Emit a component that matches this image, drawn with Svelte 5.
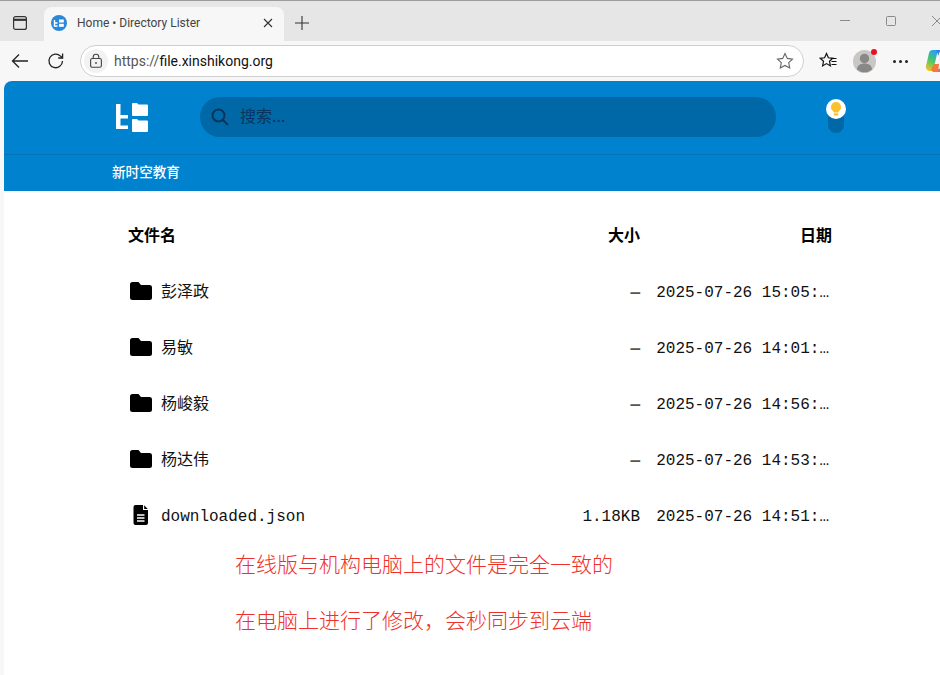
<script>
  const rows = [
    { name: '彭泽政', size: '—', date: '2025-07-26 15:05:…', dir: true },
    { name: '易敏', size: '—', date: '2025-07-26 14:01:…', dir: true },
    { name: '杨峻毅', size: '—', date: '2025-07-26 14:56:…', dir: true },
    { name: '杨达伟', size: '—', date: '2025-07-26 14:53:…', dir: true },
    { name: 'downloaded.json', size: '1.18KB', date: '2025-07-26 14:51:…', dir: false }
  ];
</script>

<div class="window">
  <div class="tabstrip">
    <svg class="tabs-ico" width="16" height="16" viewBox="0 0 16 16" fill="none" stroke="#333" stroke-width="1.2"><rect x="1.600" y="1.600" width="12.800" height="12.800" rx="2"/><path d="M2 4.800h12" stroke-width="2.200"/></svg>
    <div class="tab">
      <svg class="fav" width="16" height="16" viewBox="0 0 16 16"><circle cx="8" cy="8" r="8" fill="#2b88d8"/><path d="M3.500 5v6h3M3.500 8h3" stroke="#fff" stroke-width="1.400" fill="none"/><rect x="8" y="4.500" width="4.800" height="3" fill="#fff"/><rect x="8" y="8.800" width="4.800" height="3" fill="#fff"/></svg>
      <span class="tab-title">Home • Directory Lister</span>
      <svg class="tab-x" width="10" height="10" viewBox="0 0 10 10" stroke="#333" stroke-width="1.100"><path d="M1 1l8 8M9 1l-8 8"/></svg>
    </div>
    <svg class="plus" width="14" height="14" viewBox="0 0 14 14" stroke="#333" stroke-width="1.100"><path d="M7 0v14M0 7h14"/></svg>
    <div class="winctl">
      <svg width="10" height="10" viewBox="0 0 10 10" stroke="#8a8a8a"><path d="M0 4.500h10"/></svg>
      <svg width="10" height="10" viewBox="0 0 10 10" fill="none" stroke="#8a8a8a"><rect x=".5" y=".5" width="9" height="9" rx="1"/></svg>
      <svg width="10" height="10" viewBox="0 0 10 10" stroke="#8a8a8a"><path d="M0 0l10 10M10 0L0 10"/></svg>
    </div>
  </div>

  <div class="toolbar">
    <svg class="back" width="18" height="16" viewBox="0 0 18 16" fill="none" stroke="#222" stroke-width="1.300"><path d="M17 8H1.500M8 1.500L1.500 8 8 14.500"/></svg>
    <svg class="reload" width="18" height="18" viewBox="0 0 18 18" fill="none" stroke="#222" stroke-width="1.300"><path d="M15.500 9a6.800 6.800 0 1 1-2-4.900L15.600 6"/><path d="M15.600 1.600V6h-4.400"/></svg>
    <div class="address">
      <span class="lock"><svg width="14" height="16" viewBox="0 0 14 16" fill="none" stroke="#444" stroke-width="1.100"><rect x="1.600" y="5.500" width="10.800" height="8.800" rx="1.800"/><path d="M4.200 5.500V4a2.800 2.800 0 0 1 5.600 0v1.500"/><circle cx="7" cy="10" r=".9" fill="#444" stroke="none"/></svg></span>
      <span class="url"><span class="scheme">https://</span>file.xinshikong.org</span>
      <svg class="star" width="18" height="18" viewBox="0 0 18 18" fill="none" stroke="#666" stroke-width="1.100"><path d="M9 1.500l2.300 4.900 5.200.7-3.800 3.600 1 5.300L9 13.400l-4.700 2.600 1-5.300L1.500 7.100l5.200-.7z"/></svg>
    </div>
    <svg class="favs" width="18" height="18" viewBox="0 0 18 18" fill="none" stroke="#111" stroke-width="1.200"><path d="M7.500 1.500l1.900 4.300 4.400.5-3.300 3 .9 4.600-3.900-2.300-3.900 2.300.9-4.600-3.300-3 4.400-.5z"/><path d="M12 6.500h5.500M12.500 9.500h5M12.500 12.500h5" stroke-width="1.100"/></svg>
    <div class="avatar">
      <svg width="23" height="23" viewBox="0 0 23 23"><circle cx="11.500" cy="11.500" r="11.500" fill="#c9c7c5"/><circle cx="11.500" cy="8.500" r="4.700" fill="#8a8886"/><path d="M4 19.500c0-4 3.400-6 7.500-6s7.500 2 7.500 6a11.500 11.500 0 0 1-15 0z" fill="#8a8886"/></svg>
      <span class="dot"></span>
    </div>
    <span class="more"><i></i><i></i><i></i></span>
    <svg class="copilot" width="24" height="24" viewBox="0 0 24 24"><defs><linearGradient id="cpa" x1="0.500" y1="0" x2="0.200" y2="1"><stop offset="0" stop-color="#2aa5e8"/><stop offset=".45" stop-color="#48c76a"/><stop offset="1" stop-color="#f7c325"/></linearGradient><linearGradient id="cpb" x1="0.300" y1="0" x2="0.700" y2="1"><stop offset="0" stop-color="#2f7df0"/><stop offset=".55" stop-color="#b06ae8"/><stop offset="1" stop-color="#f2607c"/></linearGradient></defs><path d="M7 1h5L7 22H4a4 4 0 0 1-4-5L3 4a4 4 0 0 1 4-3z" fill="url(#cpa)"/><path d="M10 1h9a4 4 0 0 1 4 5l-3 13a4 4 0 0 1-4 4H8l5-15z" fill="url(#cpb)"/><path d="M13.500 3h5l-5 17h-5z" fill="#fff" opacity=".9"/><path d="M5 21l3-6h5l-1 8H7z" fill="#f47a3a"/></svg>
  </div>

  <div class="page">
    <header class="head">
      <svg class="logo" width="32" height="29" viewBox="0 0 32 29" fill="#fff"><path d="M0 1h4.500v11H12v3.500H4.500v7H12V26H0z"/><path d="M16 1a1 1 0 0 1 1-1h4l1.500 1.500H31a1 1 0 0 1 1 1V12a1 1 0 0 1-1 1H17a1 1 0 0 1-1-1z"/><path d="M16 17a1 1 0 0 1 1-1h4l1.500 1.500H31a1 1 0 0 1 1 1V28a1 1 0 0 1-1 1H17a1 1 0 0 1-1-1z"/></svg>
      <div class="search">
        <svg width="18" height="18" viewBox="0 0 18 18" fill="none" stroke="#07355c" stroke-width="2"><circle cx="7.500" cy="7.500" r="6"/><path d="M12 12l5 5"/></svg>
        <span>搜索...</span>
      </div>
      <div class="toggle">
        <span class="knob"><svg width="12" height="14" viewBox="0 0 12 14"><path d="M6 0a5 5 0 0 0-3 9l.6 1.500h4.800L9 9a5 5 0 0 0-3-9z" fill="#fbc02d"/><rect x="3.800" y="11.300" width="4.400" height="2.200" fill="#fbc02d"/></svg></span>
      </div>
    </header>
    <nav class="crumbs">新时空教育</nav>

    <main class="listing">
      <div class="row headrow">
        <div class="name"><b>文件名</b></div>
        <div class="size"><b>大小</b></div>
        <div class="date"><b>日期</b></div>
      </div>
      {#each rows as r}
        <div class="row">
          <div class="name">
            {#if r.dir}
              <svg class="ico" width="22" height="18" viewBox="0 0 22 18"><path d="M2.500 0h6l2.500 3h8.500A2.500 2.500 0 0 1 22 5.500v10a2.500 2.500 0 0 1-2.500 2.500h-17A2.500 2.500 0 0 1 0 15.500v-13A2.500 2.500 0 0 1 2.500 0z" fill="#000"/></svg>
            {:else}
              <svg class="ico" width="22" height="20" viewBox="0 0 22 20"><path d="M5.500 0H13v5h5v13a2 2 0 0 1-2 2H5.500a2 2 0 0 1-2-2V2a2 2 0 0 1 2-2z" fill="#000"/><path d="M14.200 0.300L17.800 3.900H14.200z" fill="#000"/><path d="M7 10h7.500M7 13h7.500M7 16h7.500" stroke="#fff" stroke-width="1.400"/></svg>
            {/if}
            <span class="label" class:latin={!r.dir}>{r.name}</span>
          </div>
          <div class="size stamp" class:dash={r.dir}>{r.size}</div>
          <div class="date stamp stamp-date">{r.date}</div>
        </div>
      {/each}
      <div class="notes">
        <p>在线版与机构电脑上的文件是完全一致的</p>
        <p>在电脑上进行了修改，会秒同步到云端</p>
      </div>
    </main>
  </div>
</div>

<style>
  :global(body) { margin: 0; background: #f7f7f7; }
  .window { width: 940px; height: 675px; overflow: hidden; display: flex; flex-direction: column; font-family: "Noto Sans CJK SC", sans-serif; }
  .tabstrip { height: 40px; flex: none; background: #e6e6e6; border-top: 1px solid #9c9c9c; display: flex; align-items: flex-end; }
  .tabs-ico { margin: 0 16px 10px 12px; flex: none; }
  .tab { width: 240px; height: 34px; background: #f7f7f7; border-radius: 8px 8px 0 0; display: flex; align-items: center; box-sizing: border-box; padding: 0 11px 2px 7px; flex: none; }
  .fav { margin-right: 10px; }
  .tab-title { flex: 1; font: 12px Roboto, "Liberation Sans", sans-serif; color: #444; }
  .plus { margin: 0 0 11px 11px; flex: none; }
  .winctl { margin-left: auto; display: flex; gap: 36px; align-self: flex-start; margin-top: 15px; margin-right: -2px; }
  .toolbar { height: 40px; flex: none; background: #f7f7f7; display: flex; align-items: center; }
  .toolbar > * { flex: none; }
  .back { margin-left: 11px; }
  .reload { margin-left: 18px; }
  .address { margin-left: 15px; width: 724px; height: 32px; box-sizing: border-box; background: #fff; border: 1px solid #cfcfcf; border-radius: 16px; display: flex; align-items: center; padding-left: 3px; }
  .lock { width: 24px; height: 24px; border-radius: 50%; background: #f2f2f2; display: flex; align-items: center; justify-content: center; }
  .url { margin-left: 6px; flex: 1; font: 14px Roboto, "Liberation Sans", sans-serif; color: #111; }
  .scheme { color: #555; }
  .star { margin-right: 9px; }
  .favs { margin-left: 15px; }
  .avatar { margin-left: 16px; position: relative; width: 23px; height: 23px; }
  .avatar svg { display: block; }
  .dot { position: absolute; width: 6px; height: 6px; right: -1px; top: -1px; border-radius: 50%; background: #e81123; }
  .more { margin-left: 17px; display: flex; gap: 3px; }
  .more i { width: 3px; height: 3px; border-radius: 50%; background: #222; }
  .copilot { margin-left: 18px; }
  .page { flex: 1; margin-left: 4px; background: #fff; border-radius: 8px 0 0 0; overflow: hidden; }
  .head { height: 73px; background: #0082cf; display: flex; align-items: center; box-sizing: border-box; }
  .logo { margin-left: 112px; flex: none; }
  .search { margin: -1px 0 0 52px; width: 576px; height: 40px; border-radius: 20px; background: #0068a6; display: flex; align-items: center; padding-left: 11px; box-sizing: border-box; gap: 11px; font-size: 16px; color: #07355c; flex: none; }
  .search span { padding-bottom: 5px; }
  .toggle { margin-left: 52px; width: 16px; height: 33px; border-radius: 8px; background: #0068a6; position: relative; margin-top: -3px; flex: none; }
  .knob { position: absolute; left: -2px; top: -1px; width: 20px; height: 20px; border-radius: 50%; background: #fff; display: flex; align-items: center; justify-content: center; }
  .crumbs { height: 37px; box-sizing: border-box; background: #0082cf; border-top: 1px solid #0672b5; padding: 7px 0 0 108px; color: #fff; font-size: 13.600px; font-weight: 500; line-height: 18px; }
  .listing { padding: 16px 0 0 124px; width: 704px; }
  .row { display: flex; align-items: center; height: 56px; font: 16px "Liberation Mono", "Noto Sans CJK SC", monospace; color: #111; }
  .headrow { font-family: "Noto Sans CJK SC", sans-serif; color: #000; }
  .headrow b { display: block; padding-bottom: 2px; }
  .name { flex: 1; display: flex; align-items: center; min-width: 0; }
  .ico { margin: 0 9px 0 2px; flex: none; }
  .label { padding-bottom: 2px; }
  .label.latin { padding: 3px 0 0; }
  .size { width: 80px; text-align: right; white-space: nowrap; }
  .date { width: 192px; text-align: right; white-space: nowrap; }
  .stamp { box-sizing: content-box; padding-top: 3px; }
  .stamp-date { box-sizing: border-box; padding-right: 3px; }
  .dash { color: #555; font-weight: 700; }
  .notes { padding-left: 107px; margin-top: -8px; }
  .notes p { margin: 0; height: 56px; line-height: 56px; font-size: 21px; font-weight: 300; color: #f0302a; white-space: nowrap; }
</style>
